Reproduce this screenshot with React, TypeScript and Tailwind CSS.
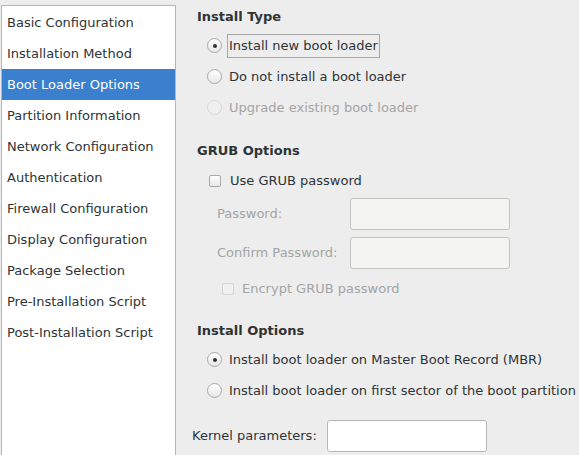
import React from 'react';

const items = [
  'Basic Configuration',
  'Installation Method',
  'Boot Loader Options',
  'Partition Information',
  'Network Configuration',
  'Authentication',
  'Firewall Configuration',
  'Display Configuration',
  'Package Selection',
  'Pre-Installation Script',
  'Post-Installation Script',
];

function Radio({ checked, disabled }: { checked?: boolean; disabled?: boolean }) {
  return (
    <span
      className={
        'flex h-[15px] w-[15px] shrink-0 items-center justify-center rounded-full border ' +
        (disabled ? 'border-[#d6d6d6] bg-[#f0f0f0]' : 'border-[#a8a8a8] bg-gradient-to-b from-white to-[#e8e8e8]')
      }
    >
      {checked && <span className="h-[4px] w-[4px] rounded-full bg-[#2e3436]" />}
    </span>
  );
}

function Check({ disabled }: { disabled?: boolean }) {
  return (
    <span
      className={
        'h-[12px] w-[12px] shrink-0 rounded-[2px] border ' +
        (disabled ? 'border-[#d6d6d6] bg-[#f0f0f0]' : 'border-[#a8a8a8] bg-gradient-to-b from-white to-[#e8e8e8]')
      }
    />
  );
}

export default function App() {
  return (
    <div
      className="flex h-[455px] w-[579px] overflow-hidden bg-[#ededed] text-[13px] text-[#2e3436]"
      style={{ fontFamily: '"DejaVu Sans", sans-serif' }}
    >
      <div className="ml-[1px] mt-[5px] h-[460px] w-[175px] shrink-0 border border-[#b6b6b3] bg-white pt-[1px]">
        {items.map((it) => (
          <div
            key={it}
            className={
              'flex h-[31px] items-center pl-[5px] ' +
              (it === 'Boot Loader Options' ? 'bg-[#3a80cf] text-white' : '')
            }
          >
            {it}
          </div>
        ))}
      </div>

      <div className="ml-[15px] flex flex-col pt-[8px]">
        <div className="ml-[6px] flex h-[18px] items-center font-bold">Install Type</div>
        <div className="ml-[16px] mt-[4px] flex flex-col">
          <div className="flex h-[31px] items-center gap-[5px]">
            <Radio checked />
            <span className="border border-[#a8a8a8] px-[1px] py-[3px] leading-[16px]">Install new boot loader</span>
          </div>
          <div className="flex h-[31px] items-center gap-[7px]">
            <Radio />
            <span>Do not install a boot loader</span>
          </div>
          <div className="flex h-[31px] items-center gap-[7px] text-[#a4a4a4]">
            <Radio disabled />
            <span>Upgrade existing boot loader</span>
          </div>
        </div>

        <div className="ml-[6px] mt-[19px] flex h-[18px] items-center font-bold">GRUB Options</div>
        <div className="ml-[18px] mt-[6px] flex h-[30px] items-center gap-[9px]">
          <Check />
          <span>Use GRUB password</span>
        </div>
        <div className="ml-[26px] mt-[2px] flex flex-col gap-[7px] text-[#a4a4a4]">
          <div className="flex items-center">
            <span className="w-[133px]">Password:</span>
            <span className="h-[32px] w-[160px] rounded-[3px] border border-[#c4c4c2] bg-[#f4f4f3]" />
          </div>
          <div className="flex items-center">
            <span className="w-[133px]">Confirm Password:</span>
            <span className="h-[32px] w-[160px] rounded-[3px] border border-[#c4c4c2] bg-[#f4f4f3]" />
          </div>
          <div className="ml-[5px] flex h-[26px] items-center gap-[8px]">
            <Check disabled />
            <span>Encrypt GRUB password</span>
          </div>
        </div>

        <div className="ml-[6px] mt-[20px] flex h-[18px] items-center font-bold">Install Options</div>
        <div className="ml-[16px] mt-[4px] flex flex-col">
          <div className="flex h-[31px] items-center gap-[7px]">
            <Radio checked />
            <span className="whitespace-nowrap">Install boot loader on Master Boot Record (MBR)</span>
          </div>
          <div className="flex h-[31px] items-center gap-[7px]">
            <Radio />
            <span className="whitespace-nowrap">Install boot loader on first sector of the boot partition</span>
          </div>
        </div>

        <div className="ml-[1px] mt-[14px] flex items-center">
          <span className="w-[135px] whitespace-nowrap">Kernel parameters:</span>
          <span className="h-[32px] w-[160px] rounded-[3px] border border-[#b6b6b3] bg-white" />
        </div>
      </div>
    </div>
  );
}
